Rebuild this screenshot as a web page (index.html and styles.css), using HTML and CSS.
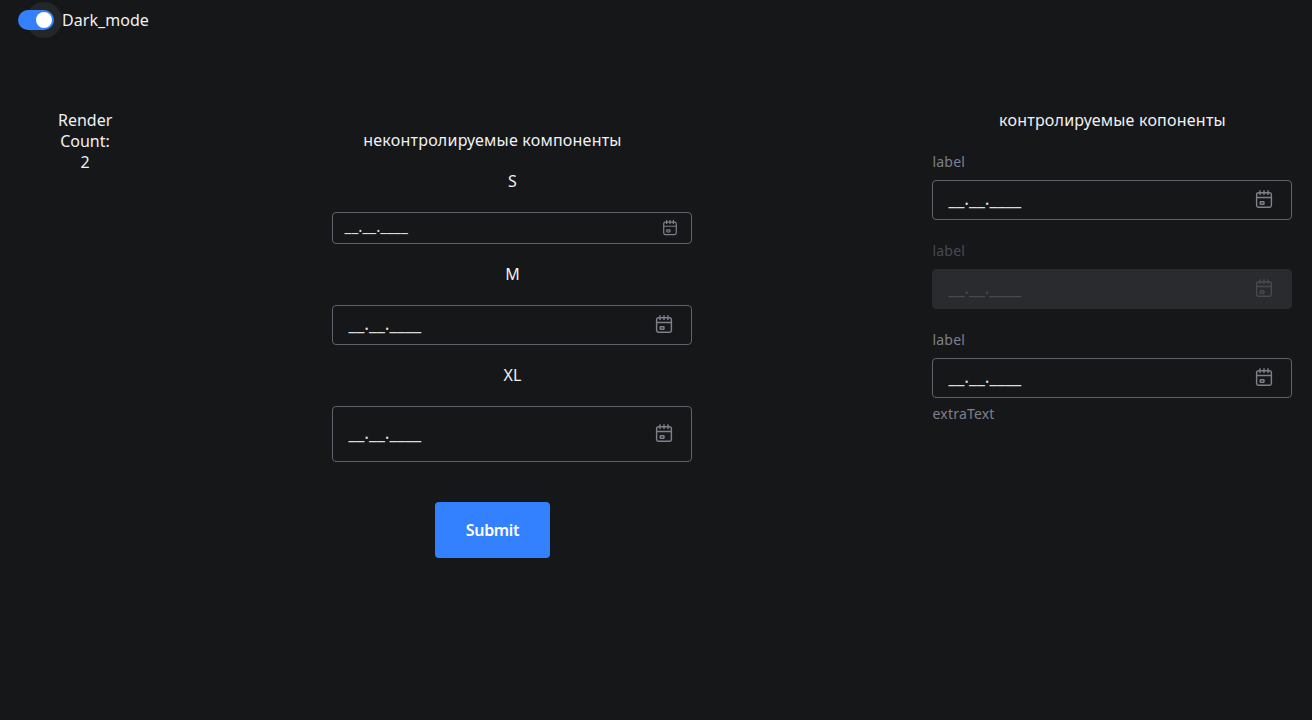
FILE: index.html
```html
<!DOCTYPE html>
<html lang="ru">
<head>
<meta charset="utf-8">
<title>Datepicker</title>
<link rel="stylesheet" href="styles.css">
</head>
<body>
<svg width="0" height="0" class="sprite">
  <symbol id="calendar" viewBox="0 0 18 20">
    <g fill="none" stroke="currentColor" stroke-width="1.4">
      <rect x="1.6" y="3.7" width="14.8" height="14.6" rx="2"/>
      <path d="M1.6 8.5h14.8M5 1.2v4.8M9 1.2v4.8M13 1.2v4.8"/>
      <rect x="5.2" y="12.7" width="3.8" height="2.6" rx=".6"/>
    </g>
  </symbol>
</svg>
<header class="mode"><span class="switch"><span class="thumb"></span></span><span>Dark_mode</span></header>
<main class="page">
  <div class="counter">Render<br>Count:<br>2</div>
  <form class="uncontrolled">
    <h2 class="title">неконтролируемые компоненты</h2>
    <div class="size">S</div>
    <div class="field field-s"><span class="mask">__.__.____</span><svg class="icon"><use href="#calendar"/></svg></div>
    <div class="size">M</div>
    <div class="field"><span class="mask">__.__.____</span><svg class="icon"><use href="#calendar"/></svg></div>
    <div class="size">XL</div>
    <div class="field field-xl"><span class="mask">__.__.____</span><svg class="icon"><use href="#calendar"/></svg></div>
    <button class="submit" type="button">Submit</button>
  </form>
  <section class="controlled">
    <h2 class="title">контролируемые копоненты</h2>
    <div class="group">
      <div class="label">label</div>
      <div class="field"><span class="mask">__.__.____</span><svg class="icon"><use href="#calendar"/></svg></div>
    </div>
    <div class="group disabled">
      <div class="label">label</div>
      <div class="field"><span class="mask">__.__.____</span><svg class="icon"><use href="#calendar"/></svg></div>
    </div>
    <div class="group">
      <div class="label">label</div>
      <div class="field"><span class="mask">__.__.____</span><svg class="icon"><use href="#calendar"/></svg></div>
      <div class="extra">extraText</div>
    </div>
  </section>
</main>
</body>
</html>
```
FILE: styles.css
```css
* { box-sizing: border-box; }
body { margin: 0; min-height: 100vh; background: #161719; color: #f1f1f3; font: 16px/21px "Noto Sans", sans-serif; }
.sprite { position: absolute; }
.mode { display: flex; align-items: center; gap: 8px; height: 40px; padding-left: 18px; isolation: isolate; letter-spacing: .05px; }
.switch { position: relative; display: flex; justify-content: flex-end; align-items: center; width: 36px; height: 20px; padding: 2px; border-radius: 10px; background: #3381ff; }
.switch::before { content: ""; position: absolute; z-index: -1; top: -8px; right: -8px; width: 36px; height: 36px; border-radius: 50%; background: #242628; }
.thumb { width: 16px; height: 16px; border-radius: 50%; background: #fff; }
.page { display: flex; padding: 70px 20px 0 58px; }
.counter { width: 54px; text-align: center; white-space: nowrap; }
.uncontrolled { display: flex; flex-direction: column; width: 360px; margin: 20px 240px 0 220px; }
.controlled { width: 360px; }
.title { margin: 0; padding-left: 1px; font: inherit; text-align: center; white-space: nowrap; letter-spacing: .22px; }
.uncontrolled .title { width: 320px; }
.size { height: 21px; margin: 20px 0; padding-left: 1px; text-align: center; }
.field { display: flex; align-items: center; justify-content: space-between; height: 40px; padding: 0 18px 0 15.5px; border: 1px solid #60616b; border-radius: 4px; }
.mask { font-size: 17.8px; margin-bottom: 4px; color: #dcdcde; }
.field-s { height: 32px; padding: 0 13px 0 11.5px; }
.field-s .mask { font-size: 15.5px; margin-bottom: 3px; }
.field-xl { height: 56px; }
.icon { width: 18px; height: 20px; color: #7e808b; margin-bottom: 2px; }
.field-s .icon { width: 16px; height: 17px; margin-bottom: 1px; }
.submit { width: 115px; height: 56px; padding: 0; margin: 40px 0 0 103px; border: 0; border-radius: 4px; background: #3381ff; color: #fff; font: 600 16px/21px "Noto Sans", sans-serif; letter-spacing: -.35px; }
.label, .extra { padding-left: .5px; color: #7e808b; font-size: 14px; line-height: 18px; letter-spacing: .2px; }
.group { margin-bottom: 22px; }
.title + .group { margin-top: 22px; }
.label { margin-bottom: 9px; }
.extra { margin-top: 7px; }
.disabled .label, .disabled .mask, .disabled .icon { color: #484951; }
.disabled .field { border-color: #2a2b2e; background: #2a2b2e; }
```
